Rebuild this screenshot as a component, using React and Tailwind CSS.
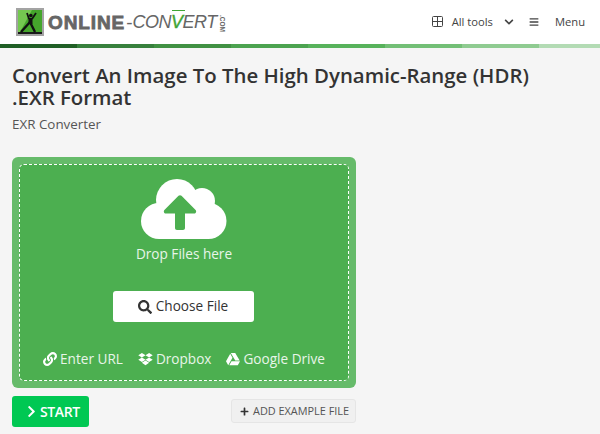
import React from "react";
import { FaLink, FaDropbox, FaGoogleDrive, FaSearch, FaPlus, FaChevronRight, FaChevronDown, FaBars } from "react-icons/fa";

const segs = ["bg-[#205f26]", "bg-[#37803d]", "bg-[#419143]", "bg-[#4ca350]", "bg-[#57b25b]", "bg-[#73bf76]", "bg-[#8fcb91]", "bg-[#b3dbb4]"];

function Logo() {
  return (
    <div className="flex items-center">
      <svg width="28" height="28" viewBox="0 0 28 28" className="shrink-0">
        <rect width="28" height="28" fill="#a3a3a3" />
        <rect x="2" y="2" width="24" height="24" fill="#45a52c" />
        <path d="M2 24 L2 2 L16 2 L4 24 Z" fill="#74c850" />
        <path d="M2 24 L26 24 L26 26 L2 26 Z" fill="#1a1a1a" />
        <path d="M5 24 L14 14 L19 24" fill="none" stroke="#111" strokeWidth="2.4" />
        <path d="M14.500 16 L14.500 10" stroke="#111" strokeWidth="4" />
        <path d="M11 5 L13 11 M20 5 L16 11" stroke="#111" strokeWidth="1.800" />
        <circle cx="14.800" cy="7.500" r="1.800" fill="#111" />
      </svg>
      <div className="ml-[4px] flex items-center font-['Liberation_Sans',sans-serif] leading-none">
        <span className="text-[19px] font-bold text-[#666] [-webkit-text-stroke:0.8px_#666] tracking-[0.9px]">ONLINE</span>
        <span className="text-[19px] text-[#666] ml-[1px]">-</span>
        <span className="text-[18px] italic text-[#666] tracking-[-0.5px]">CON</span>
        <span className="relative text-[18px] italic text-[#3fa535] [-webkit-text-stroke:0.4px_#3fa535] tracking-[-0.5px]">
          V
          <span className="absolute left-[1px] -top-[3px] w-[13px] h-[1px] bg-[#3fa535]" />
        </span>
        <span className="text-[18px] italic text-[#666] tracking-[-0.5px]">ERT</span>
        <span className="text-[6.500px] font-bold text-[#666] [writing-mode:vertical-rl] ml-[2px] mt-[2px]">.COM</span>
      </div>
    </div>
  );
}

function CloudIcon() {
  return (
    <svg width="86" height="60" viewBox="0 0 86 60">
      <g fill="#fff">
        <circle cx="36" cy="21" r="21" />
        <circle cx="61" cy="22" r="13" />
        <circle cx="18" cy="42" r="18" />
        <circle cx="67.500" cy="42" r="18" />
        <rect x="18" y="24" width="50" height="36" />
      </g>
      <path fill="#4caf50" d="M37.500 16.800 C38.300 16 39.700 16 40.500 16.800 L54.600 31 C55.800 32.300 55 34.500 53.200 34.500 L44 34.500 L44 49 C44 50.200 43.200 51 42 51 L36 51 C34.800 51 34 50.200 34 49 L34 34.500 L24.800 34.500 C23 34.500 22.200 32.300 23.400 31 Z" />
    </svg>
  );
}

export default function App() {
  return (
    <div className="w-[600px] h-[434px] overflow-hidden bg-[#f5f5f5] font-['Open_Sans',sans-serif] text-[#333]">
      <header className="h-[44px] bg-white flex items-center justify-between pl-[16px] pr-[15px]">
        <Logo />
        <nav className="flex items-center text-[11.200px] text-[#444]">
          <svg width="11" height="11" viewBox="0 0 11 11" fill="none" stroke="#444" strokeWidth="1" className="mr-[9px]">
            <rect x="0.500" y="0.500" width="10" height="10" rx="1" />
            <path d="M5.500 0.500V10.500M0.500 5.500H10.500" />
          </svg>
          <span>All tools</span>
          <FaChevronDown className="ml-[11px] w-[10px] h-[10px] text-[#444]" />
          <FaBars className="ml-[15px] w-[10px] h-[10px] text-[#444]" />
          <span className="ml-[16px]">Menu</span>
        </nav>
      </header>
      <div className="flex h-[4px]">
        {segs.map((c, i) => (
          <div key={i} className={`${c} ${i === 7 ? "flex-1" : "w-[77px]"}`} />
        ))}
      </div>

      <main className="px-[12px]">
        <h1 className="mt-[16px] text-[20.400px] leading-[22px] font-semibold text-[#333]">
          Convert An Image To The High Dynamic-Range (HDR)
          <br />
          .EXR Format
        </h1>
        <p className="mt-[6px] text-[13.400px] leading-[20px] text-[#555]">EXR Converter</p>

        <section className="mt-[23px] w-[344px] h-[231px] rounded-[6px] bg-[#66bb6a] p-[7px]">
          <div className="h-[217px] rounded-[5px] bg-[#4caf50] border border-dashed border-white flex flex-col items-center">
            <div className="mt-[14px]">
              <CloudIcon />
            </div>
            <p className="mt-[5px] text-[13.600px] leading-[20px] text-[#e8f5e9]">Drop Files here</p>
            <button className="mt-[27px] mr-[2px] w-[141px] h-[31px] bg-white rounded-[3px] flex items-center justify-center gap-[4px] text-[13.600px] text-[#333]">
              <FaSearch className="w-[14px] h-[14px]" />
              Choose File
            </button>
            <div className="mt-[27px] flex items-center text-[13.600px] leading-[20px] text-[#e8f5e9]">
              <span className="flex items-center gap-[3px]"><FaLink className="w-[14px] h-[14px] text-white" />Enter URL</span>
              <span className="flex items-center gap-[3px] ml-[15px]"><FaDropbox className="w-[15px] h-[14px] text-white" />Dropbox</span>
              <span className="flex items-center gap-[3px] ml-[15px]"><FaGoogleDrive className="w-[14px] h-[14px] text-white" />Google Drive</span>
            </div>
          </div>
        </section>

        <div className="w-[344px] mt-[8px] flex items-start justify-between">
          <button className="w-[77px] h-[31px] pl-[15px] rounded-[3px] bg-[#00c853] text-white text-[14px] tracking-[-0.4px] font-semibold flex items-center gap-[4px]">
            <FaChevronRight className="w-[9px] h-[13px]" />
            START
          </button>
          <button className="mt-[3px] w-[125px] h-[24px] pl-[8px] rounded-[3px] bg-[#f0f0f0] border border-[#e5e5e5] text-[#555] text-[10.900px] flex items-center gap-[4px]">
            <FaPlus className="w-[9px] h-[9px] text-[#333]" />
            ADD EXAMPLE FILE
          </button>
        </div>
      </main>
    </div>
  );
}
